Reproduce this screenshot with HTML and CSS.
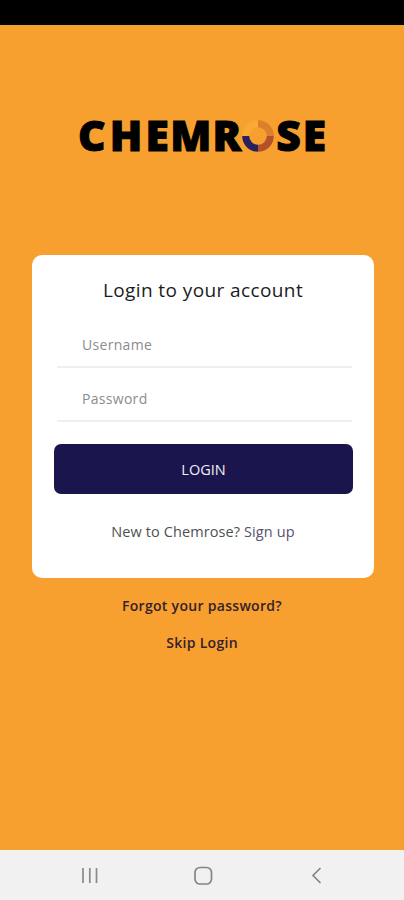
FILE: index.html
```
<!DOCTYPE html>
<html lang="en">
<head>
<meta charset="utf-8">
<title>Chemrose Login</title>
<link rel="stylesheet" href="styles.css">
</head>
<body>
<div class="status-bar"></div>
<main class="screen">
  <svg class="logo" width="264" height="60" viewBox="0 0 264 60" role="img" aria-label="Chemrose">
    <text class="logo-text" x="8 39.800 75.500 100.300 142.500" y="45">CHEMR</text>
    <g fill="none" stroke-width="7">
      <path d="M175.700 30A12.300 12.300 0 0 1 188 17.700" stroke="#fba935"/>
      <path d="M188 17.700A12.300 12.300 0 0 1 200.300 30" stroke="#df7f28"/>
      <path d="M200.300 30A12.300 12.300 0 0 1 188 42.300" stroke="#b4512b"/>
      <path d="M188 42.300A12.300 12.300 0 0 1 175.700 30" stroke="#29205e"/>
    </g>
    <text class="logo-text" x="206.300 232.800" y="45">SE</text>
  </svg>
  <form class="card">
    <h1 class="title">Login to your account</h1>
    <div class="field">Username</div>
    <div class="field">Password</div>
    <button class="login" type="button">LOGIN</button>
    <p class="signup">New to Chemrose? <a>Sign up</a></p>
  </form>
  <a class="link">Forgot your password?</a>
  <a class="link skip">Skip Login</a>
</main>
<nav class="nav-bar">
  <svg width="18" height="18" viewBox="0 0 18 18"><path d="M2 1v15M8.800 1v15M15.500 1v15" stroke="#8a8a8a" stroke-width="1.700"/></svg>
  <svg width="20" height="20" viewBox="0 0 20 20"><rect x="1" y="1.500" width="16.500" height="16.500" rx="5" fill="none" stroke="#858585" stroke-width="1.700"/></svg>
  <svg width="18" height="18" viewBox="0 0 18 18"><path d="M12.500 1L5 8.500l7.500 7.500" fill="none" stroke="#858585" stroke-width="1.700"/></svg>
</nav>
</body>
</html>
```
FILE: styles.css
```
* { box-sizing: border-box; }
body {
  margin: 0;
  height: 900px;
  display: flex;
  flex-direction: column;
  background: #f7a02f;
  font-family: "Open Sans", "Noto Sans", sans-serif;
  overflow: hidden;
}
.status-bar { height: 25px; background: #000; }
.screen {
  flex: 1;
  display: flex;
  flex-direction: column;
  align-items: center;
  padding-top: 81px;
}
.logo { display: block; }
.logo-text {
  font: 800 42.5px "Open Sans", sans-serif;
  fill: #000;
  stroke: #000;
  stroke-width: 1px;
}
.card {
  width: 342px;
  height: 323px;
  margin: 89px 0 1px 2px;
  padding: 20px 22px 0;
  border-radius: 10px;
  background: #fff;
}
.title {
  margin: 0 0 24px;
  font-size: 19px;
  line-height: 30px;
  font-weight: 500;
  letter-spacing: 0.4px;
  text-align: center;
  color: #1c1c1c;
}
.field {
  height: 39px;
  margin: 0 0 15px 3px;
  padding-left: 25px;
  border-bottom: 2px solid #efefef;
  font-size: 14px;
  line-height: 32px;
  letter-spacing: 0.3px;
  color: #8c8c8c;
}
.login {
  display: block;
  width: 299px;
  height: 50px;
  margin-top: 22px;
  padding: 0;
  border: 0;
  border-radius: 7px;
  background: #1b154d;
  font: 500 14.5px "Open Sans", sans-serif;
  color: #f0eff5;
}
.signup {
  margin: 27px 0 0;
  font-size: 14.5px;
  line-height: 22px;
  letter-spacing: 0.1px;
  text-align: center;
  color: #505050;
}
.signup a { color: #56506f; }
.link {
  margin-top: 16px;
  font-size: 14px;
  line-height: 22px;
  font-weight: 600;
  letter-spacing: 0.3px;
  color: #33202c;
}
.skip { margin-top: 15px; }
.nav-bar {
  height: 50px;
  display: flex;
  align-items: center;
  justify-content: space-between;
  padding: 1px 78px 0 81px;
  background: #f1f1f1;
}
```
